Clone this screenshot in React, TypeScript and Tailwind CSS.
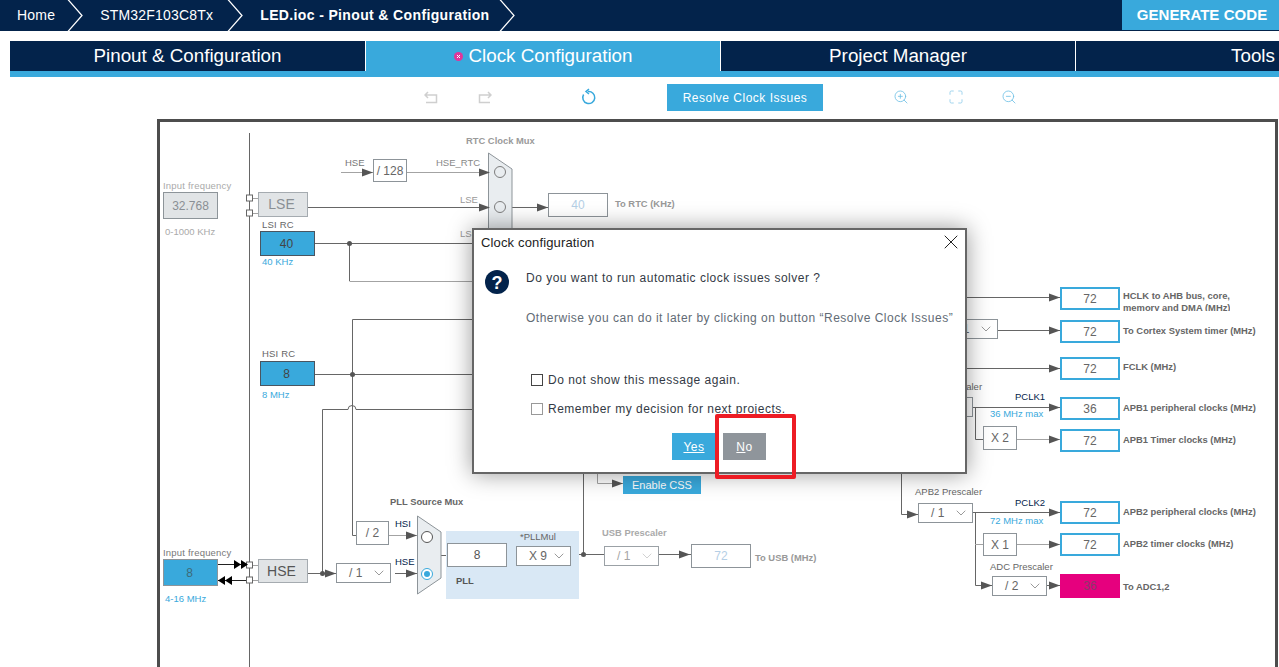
import React from 'react';
import { ChevronDown, Maximize, X, ZoomIn, ZoomOut } from 'lucide-react';

const Chevron = () => (
  <svg width="16" height="31" viewBox="0 0 16 31" className="shrink-0 block">
    <path d="M0.5 -1L15 15.5L0.5 32" fill="none" stroke="#fff" strokeWidth="1.25" />
  </svg>
);

const Arrow = ({ x, y, fill = '#555' }: { x: number; y: number; fill?: string }) => (
  <polygon points={`${x},${y + 0.5} ${x - 11},${y - 3.5} ${x - 11},${y + 4.5}`} fill={fill} />
);

const Dot = ({ x, y }: { x: number; y: number }) => <circle cx={x} cy={y} r="2.5" fill="#555" />;

const Pad = ({ y }: { y: number }) => (
  <rect x="246.5" y={y} width="6" height="6" fill="#fff" stroke="#666" />
);

const Wires = () => (
  <svg viewBox="160 122 1115 560" className="absolute left-0 top-0 w-[1115px] h-[560px]">
    <g fill="none" stroke="#666" strokeWidth="1">
      <path d="M249.5 133V690" />
      <path d="M308 207.5H488M315 243.5H472M349.5 243.5V281M315 374.5H472" />
      <path d="M352.5 319.5H472M352.5 319.5V535.5H356M322.5 573.5V409.5H348a4 4 0 0 1 8 0H472" />
      <path d="M308 573.5H336M395 573.5H417M441 555.5H447M507 555.5H516M571 554.5H604" />
      <path d="M583.5 470V555M659 554.5H691M512 207.5H548" />
      <path d="M960 297.5H1060M998 330.5H1060M960 368.5H1060M973 407.5H1060M975.5 407V439.5H983" />
      <path d="M901.5 470V514.5H918M973 512.5H1060M975.5 512V585.5H992M1047 585.5H1060" />
    </g>
    <g fill="none" stroke="#a3a3a3" strokeWidth="1">
      <path d="M341 172.5H373M407 172.5H488M349.5 281.5H472M389 535.5H417M597.5 470V483.5H623" />
      <path d="M1017 439.5H1060M975 544.5H983M1017 544.5H1060" />
      <path d="M253 198.5H258M253 213.5H258M253 565.5H258M253 580.5H258" />
    </g>
    <path d="M218 564.5H246M218 580.5H246" stroke="#222" fill="none" />
    <Pad y={195} />
    <Pad y={210} />
    <Pad y={562} />
    <Pad y={577} />
    <polygon points="234,560 241,564.5 234,569" fill="#000" />
    <polygon points="241,560 248,564.5 241,569" fill="#000" />
    <polygon points="225,576 218,580.5 225,585" fill="#000" />
    <polygon points="232,576 225,580.5 232,585" fill="#000" />
    <polygon points="488.5,153 512,169 512,320 488.5,320" fill="#e9edf0" stroke="#8d9499" />
    <circle cx="500" cy="172" r="5.5" fill="none" stroke="#7d7d7d" />
    <circle cx="500" cy="207" r="5.5" fill="none" stroke="#7d7d7d" />
    <polygon points="417.5,516 441,532 441,578 417.5,594" fill="#e9edf0" stroke="#8d9499" />
    <circle cx="427" cy="537" r="5.5" fill="#fff" stroke="#555" />
    <circle cx="427" cy="574" r="5.5" fill="#fff" stroke="#39a9dc" />
    <circle cx="427" cy="574" r="3" fill="#39a9dc" />
    <Dot x={349.5} y={243.5} />
    <Dot x={352.5} y={374.5} />
    <Dot x={322.5} y={573.5} />
    <Dot x={583.5} y={554.5} />
    <Arrow x={373} y={172} />
    <Arrow x={490} y={172} />
    <Arrow x={490} y={207} />
    <Arrow x={548} y={207} />
    <Arrow x={623} y={483} />
    <Arrow x={336} y={573} />
    <Arrow x={417} y={535} />
    <Arrow x={417} y={573} />
    <Arrow x={690} y={554} />
    <Arrow x={918} y={514} />
    <Arrow x={992} y={585} />
    <Arrow x={1060} y={297} />
    <Arrow x={1060} y={330} />
    <Arrow x={1060} y={368} />
    <Arrow x={1060} y={407} />
    <Arrow x={1060} y={439} />
    <Arrow x={1060} y={512} />
    <Arrow x={1060} y={544} />
    <Arrow x={1060} y={585} />
  </svg>
);

const labelKinds = {
  note: 'text-[9.5px]',
  wide: 'text-[9.5px] tracking-[0.2px]',
  caption: 'text-[9.4px] font-bold',
};

const Label = ({
  className,
  kind = 'note',
  children,
}: {
  className: string;
  kind?: keyof typeof labelKinds;
  children: React.ReactNode;
}) => (
  <span className={`absolute mt-px h-[12px] leading-[12px] whitespace-nowrap ${labelKinds[kind]} ${className}`}>{children}</span>
);

const Box = ({ className, children }: { className: string; children: React.ReactNode }) => (
  <div className={`absolute flex items-center justify-center ${className}`}>{children}</div>
);

const Select = ({ className, value, muted }: { className: string; value: string; muted?: boolean }) => (
  <div
    className={`absolute w-[55px] h-[20px] flex items-center justify-between pl-[12px] pr-[3px] bg-white border text-[12px] ${
      muted ? 'border-[#9ba1a6] text-[#a5a5a5]' : 'border-[#8d9499] text-[#666]'
    } ${className}`}
  >
    <span>{value}</span>
    <ChevronDown size={16} strokeWidth={1} className={muted ? 'text-[#bbb]' : 'text-[#666]'} />
  </div>
);

const Output = ({ className, value }: { className: string; value: string }) => (
  <Box className={`left-[900px] w-[60px] h-[23px] bg-white border-2 border-[#39a9dc] text-[12px] text-[#666] ${className}`}>
    {value}
  </Box>
);

const Diagram = () => (
  <div className="relative mt-[8px] ml-[157px] w-[1121px] h-[600px] border-[3px] border-[#4d4d4d]">
    <Wires />

    <Label kind="caption" className="left-[306px] top-[12px] text-[#9a9a9a]">RTC Clock Mux</Label>
    <Label className="left-[185px] top-[34px] text-[#777]">HSE</Label>
    <Box className="left-[213px] top-[37px] w-[34px] h-[23px] bg-white border border-[#8d9499] text-[12px] text-[#666]">/ 128</Box>
    <Label className="left-[276px] top-[34px] text-[#888]">HSE_RTC</Label>
    <Label kind="wide" className="left-[3px] top-[57px] text-[#aaa]">Input frequency</Label>
    <Box className="left-[3px] top-[70px] w-[55px] h-[27px] bg-[#e1e4e6] border border-[#8d9499] text-[12px] text-[#8a8f94]">32.768</Box>
    <Label className="left-[5px] top-[103px] text-[#aaa]">0-1000 KHz</Label>
    <Box className="left-[98px] top-[70px] w-[50px] h-[25px] pr-[3px] bg-[#e1e4e6] border border-[#a5abb0] text-[14px] text-[#8a8f94]">LSE</Box>
    <Label className="left-[300px] top-[71px] text-[#999]">LSE</Label>
    <Label kind="wide" className="left-[102px] top-[96px] text-[#666]">LSI RC</Label>
    <Box className="left-[100px] top-[109px] w-[55px] h-[25px] pr-[2px] bg-[#39a9dc] border border-[#4a5560] text-[12px] text-[#444]">40</Box>
    <Label className="left-[102px] top-[133px] text-[#39a9dc]">40 KHz</Label>
    <Label className="left-[300px] top-[105px] text-[#999]">LSI</Label>
    <Label kind="wide" className="left-[102px] top-[225px] text-[#666]">HSI RC</Label>
    <Box className="left-[100px] top-[239px] w-[55px] h-[25px] pr-[2px] bg-[#39a9dc] border border-[#4a5560] text-[12px] text-[#444]">8</Box>
    <Label className="left-[102px] top-[266px] text-[#39a9dc]">8 MHz</Label>

    <Box className="left-[388px] top-[71px] w-[60px] h-[24px] bg-white border border-[#8d9499] text-[12px] text-[#b5cfe6]">40</Box>
    <Label kind="caption" className="left-[455px] top-[75px] text-[#999]">To RTC (KHz)</Label>

    <Label kind="wide" className="left-[3px] top-[424px] text-[#777]">Input frequency</Label>
    <Box className="left-[3px] top-[437px] w-[55px] h-[27px] pr-[2px] bg-[#39a9dc] border border-[#8d9499] text-[12px] text-[#3d6b78]">8</Box>
    <Label className="left-[5px] top-[470px] text-[#39a9dc]">4-16 MHz</Label>
    <Box className="left-[98px] top-[437px] w-[50px] h-[24px] pr-[3px] bg-[#e1e4e6] border border-[#a5abb0] text-[14px] text-[#555]">HSE</Box>
    <Select className="left-[176px] top-[441px]" value="/ 1" />
    <Box className="left-[196px] top-[399px] w-[33px] h-[24px] bg-white border border-[#8d9499] text-[12px] text-[#666]">/ 2</Box>
    <Label className="left-[235px] top-[395px] text-[#03234b]">HSI</Label>
    <Label className="left-[235px] top-[433px] text-[#03234b]">HSE</Label>
    <Label kind="caption" className="left-[230px] top-[373px] text-[#666]">PLL Source Mux</Label>

    <div className="absolute left-[286px] top-[409px] w-[133px] h-[68px] bg-[#d9e8f5]" />
    <Box className="left-[287px] top-[421px] w-[60px] h-[24px] bg-white border border-[#8d9499] text-[12px] text-[#555]">8</Box>
    <Label kind="caption" className="left-[296px] top-[452px] text-[#555]">PLL</Label>
    <Label className="left-[360px] top-[408px] text-[#666]">*PLLMul</Label>
    <Select className="left-[356px] top-[424px]" value="X 9" />

    <Label kind="caption" className="left-[442px] top-[404px] text-[#aaa]">USB Prescaler</Label>
    <Select className="left-[444px] top-[424px]" value="/ 1" muted />
    <Box className="left-[531px] top-[422px] w-[60px] h-[24px] bg-white border border-[#8d9499] text-[12px] text-[#b5cfe6]">72</Box>
    <Label kind="caption" className="left-[595px] top-[429px] text-[#999]">To USB (MHz)</Label>
    <Box className="left-[463px] top-[354px] w-[78px] h-[18px] bg-[#39a9dc] text-[11px] text-white">Enable CSS</Box>

    <Select className="left-[783px] top-[197px]" value="/ 1" />
    <Output className="top-[165px]" value="72" />
    <Output className="top-[198px]" value="72" />
    <Output className="top-[235px]" value="72" />
    <Output className="top-[275px]" value="36" />
    <Output className="top-[307px]" value="72" />
    <Label kind="caption" className="left-[963px] top-[167px] text-[#666]">HCLK to AHB bus, core,</Label>
    <div className="absolute left-[963px] top-[180px] h-[9px] overflow-hidden">
      <span className="block h-[12px] leading-[12px] text-[9.4px] font-bold text-[#666] whitespace-nowrap">memory and DMA (MHz)</span>
    </div>
    <Label kind="caption" className="left-[963px] top-[202px] text-[#666]">To Cortex System timer (MHz)</Label>
    <Label kind="caption" className="left-[963px] top-[238px] text-[#666]">FCLK (MHz)</Label>
    <Label kind="caption" className="left-[963px] top-[279px] text-[#666]">APB1 peripheral clocks (MHz)</Label>
    <Label kind="caption" className="left-[963px] top-[311px] text-[#666]">APB1 Timer clocks (MHz)</Label>
    <Label className="left-[755px] top-[258px] text-[#666]">APB1 Prescaler</Label>
    <Select className="left-[758px] top-[275px]" value="/ 2" />
    <Label className="left-[855px] top-[268px] text-[#03234b]">PCLK1</Label>
    <Label className="left-[830px] top-[285px] text-[#39a9dc]">36 MHz max</Label>
    <Box className="left-[823px] top-[304px] w-[34px] h-[24px] bg-white border border-[#8d9499] text-[12px] text-[#666]">X 2</Box>

    <Label className="left-[755px] top-[363px] text-[#666]">APB2 Prescaler</Label>
    <Select className="left-[758px] top-[381px]" value="/ 1" />
    <Label className="left-[855px] top-[374px] text-[#03234b]">PCLK2</Label>
    <Label className="left-[830px] top-[392px] text-[#39a9dc]">72 MHz max</Label>
    <Output className="top-[379px]" value="72" />
    <Output className="top-[411px]" value="72" />
    <Box className="left-[900px] top-[452px] w-[60px] h-[24px] bg-[#e6007e] text-[12px] text-[#8a3a6a]">36</Box>
    <Box className="left-[823px] top-[411px] w-[34px] h-[23px] bg-white border border-[#8d9499] text-[12px] text-[#666]">X 1</Box>
    <Label className="left-[830px] top-[438px] text-[#666]">ADC Prescaler</Label>
    <Select className="left-[832px] top-[454px]" value="/ 2" />
    <Label kind="caption" className="left-[963px] top-[383px] text-[#666]">APB2 peripheral clocks (MHz)</Label>
    <Label kind="caption" className="left-[963px] top-[415px] text-[#666]">APB2 timer clocks (MHz)</Label>
    <Label kind="caption" className="left-[963px] top-[458px] text-[#666]">To ADC1,2</Label>
  </div>
);

const Dialog = () => (
  <div className="absolute left-[472px] top-[228px] w-[495px] h-[246px] bg-white border-2 border-[#666] shadow-[0_0_22px_rgba(0,0,0,0.4)]">
    <div className="h-[24px] flex items-center justify-between pl-[7px] pr-[2px] text-[13px] tracking-[0.15px] text-[#222]">
      <span className="pt-[2px]">Clock configuration</span>
      <X size={24} strokeWidth={1} className="text-[#222]" />
    </div>
    <div className="mt-[16px] pl-[11px] flex items-start gap-[17px]">
      <svg width="24" height="24" viewBox="0 0 24 24" className="shrink-0">
        <circle cx="12" cy="12" r="12" fill="#03234b" />
        <text x="12" y="18.5" textAnchor="middle" fill="#fff" fontSize="18" fontWeight="700" fontFamily="Liberation Sans, sans-serif">?</text>
      </svg>
      <div className="pt-px text-[12px] leading-[14px] tracking-[0.5px]">
        <p className="text-[#333a45]">Do you want to run automatic clock issues solver ?</p>
        <p className="mt-[26px] text-[#626b75] whitespace-nowrap">Otherwise you can do it later by clicking on button “Resolve Clock Issues”</p>
      </div>
    </div>
    <div className="mt-[48px] pl-[57px] flex flex-col gap-[15px] text-[12px] leading-[14px] tracking-[0.5px] text-[#333a45]">
      <label className="flex items-center gap-[5px]">
        <span className="w-[12px] h-[12px] border border-[#444] bg-white" />
        Do not show this message again.
      </label>
      <label className="flex items-center gap-[5px]">
        <span className="w-[12px] h-[12px] border border-[#999] bg-white" />
        Remember my decision for next projects.
      </label>
    </div>
    <div className="mt-[17px] pl-[198px] flex gap-[7px] text-[12px] tracking-[0.5px] text-white">
      <button className="w-[44px] h-[27px] bg-[#39a9dc]"><span className="underline">Yes</span></button>
      <button className="w-[43px] h-[27px] bg-[#8f959b]"><span className="underline">N</span>o</button>
    </div>
  </div>
);

export default function App() {
  return (
    <div className="relative w-[1279px] h-[667px] overflow-hidden bg-white font-['Liberation_Sans',Arial,sans-serif]">
      {/* Breadcrumb */}
      <header className="h-[31px] bg-[#03234b] flex items-center pl-[17px] text-[14px] tracking-[0.2px] text-white">
        <span>Home</span>
        <span className="ml-[12px]"><Chevron /></span>
        <span className="ml-[17px]">STM32F103C8Tx</span>
        <span className="ml-[14px]"><Chevron /></span>
        <span className="ml-[17px] font-bold tracking-[0.36px]">LED.ioc - Pinout &amp; Configuration</span>
        <span className="ml-[9px]"><Chevron /></span>
        <button className="ml-auto w-[157px] h-[30px] pl-[3px] self-start bg-[#39a9dc] text-[15px] tracking-[0.05px] font-bold text-white">GENERATE CODE</button>
      </header>

      {/* Tabs */}
      <nav className="mt-[10px] ml-[10px] h-[36px] bg-[#39a9dc] flex items-start text-[18.8px] text-white">
        <div className="w-[356px] h-[30px] pt-px shrink-0 bg-[#03234b] border-r border-white flex items-center justify-center">Pinout &amp; Configuration</div>
        <div className="w-[355px] h-[30px] pt-px shrink-0 bg-[#39a9dc] border-r border-white flex items-center justify-center gap-[6px]">
          <svg width="9" height="9" viewBox="0 0 9 9" className="shrink-0">
            <circle cx="4.5" cy="4.5" r="4.5" fill="#e0359a" />
            <path d="M3 3L6 6M6 3L3 6" stroke="#fff" strokeWidth="1" />
          </svg>
          Clock Configuration
        </div>
        <div className="w-[355px] h-[30px] pt-px shrink-0 bg-[#03234b] border-r border-white flex items-center justify-center">Project Manager</div>
        <div className="w-[354px] h-[30px] pt-px shrink-0 bg-[#03234b] flex items-center justify-center">Tools</div>
      </nav>

      {/* Toolbar */}
      <div className="h-[27px] mt-[7px] flex items-center">
        <svg width="14" height="14" viewBox="0 0 14 14" className="ml-[424px] -translate-y-px text-[#cfcfcf]" fill="none" stroke="currentColor" strokeWidth="1.5">
          <path d="M1 5H12.5V12.5H2M4 2L1 5L4 8" />
        </svg>
        <svg width="14" height="14" viewBox="0 0 14 14" className="ml-[40px] -translate-y-px text-[#cfcfcf]" fill="none" stroke="currentColor" strokeWidth="1.5">
          <path d="M13 5H1.5V12.5H12M10 2L13 5L10 8" />
        </svg>
        <svg width="18" height="18" viewBox="0 0 18 18" className="ml-[88px] -translate-y-px text-[#39a9dc]" fill="none" stroke="currentColor" strokeWidth="1.5">
          <path d="M8 3.6A6 6 0 1 1 3.6 6.5" />
          <path d="M9 1L6 3.6L9 6" />
        </svg>
        <button className="ml-[69px] w-[156px] h-[27px] bg-[#39a9dc] text-[12px] tracking-[0.5px] text-white">Resolve Clock Issues</button>
        <ZoomIn size={16} strokeWidth={1.25} className="ml-[70px] -translate-y-px text-[#6fc0e6]" />
        <Maximize size={16} strokeWidth={1.5} className="ml-[39px] -translate-y-px text-[#9fd4ee]" />
        <ZoomOut size={16} strokeWidth={1.25} className="ml-[37px] -translate-y-px text-[#6fc0e6]" />
      </div>

      <Diagram />
      <Dialog />

      {/* Red highlight from the annotated screenshot */}
      <div className="absolute left-[715px] top-[414px] w-[81px] h-[65px] border-[4px] border-[#ed1c24] rounded-[2px]" />
    </div>
  );
}
